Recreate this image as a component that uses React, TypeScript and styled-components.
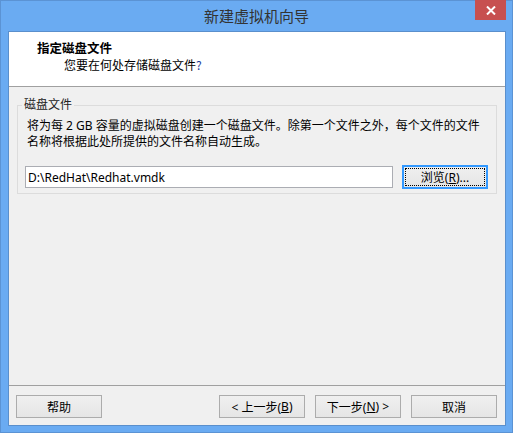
import React from 'react';
import styled, { createGlobalStyle } from 'styled-components';

const GlobalStyle = createGlobalStyle`
  html, body {
    margin: 0;
    padding: 0;
    background: #6aabf2;
  }
  body {
    font-family: "Noto Sans", "Noto Sans CJK SC", sans-serif;
    font-size: 12px;
    color: #000;
  }
`;

const Frame = styled.div`
  width: 513px;
  height: 433px;
  box-sizing: border-box;
  background: #6aabf2;
  border: 1px solid #5b93d4;
  display: flex;
  flex-direction: column;
`;

const TitleBar = styled.div`
  height: 30px;
  display: grid;
  grid-template-columns: 1fr auto 1fr;
  align-items: start;
`;

const Title = styled.div`
  grid-column: 2;
  font-family: "Noto Sans CJK SC", sans-serif;
  font-size: 15px;
  line-height: 30px;
  color: #333;
`;

const CloseButton = styled.div`
  grid-column: 3;
  justify-self: end;
  width: 31px;
  height: 20px;
  margin-top: -1px;
  margin-right: 6px;
  background: #c75050;
  display: flex;
  align-items: center;
  justify-content: center;
`;

const Client = styled.div`
  flex: 1;
  margin: 0 6px 6px 7px;
  background: #f0f0f0;
  border: 1px solid #5a8fcc;
  display: flex;
  flex-direction: column;
`;

const Header = styled.div`
  height: 55px;
  background: #fff;
  border-bottom: 1px solid #a0a0a0;
  padding: 7px 0 0 28px;
  box-sizing: border-box;
`;

const HeaderTitle = styled.div`
  font-family: "Noto Sans CJK SC", sans-serif;
  font-weight: bold;
  font-size: 12.5px;
  line-height: 17px;
`;

const HeaderSub = styled.div`
  font-family: "Noto Sans CJK SC", sans-serif;
  margin-left: 27px;
  line-height: 17px;
  .q { color: #1d3c9a; }
`;

const Body = styled.div`
  flex: 1;
  padding: 10px 8px 0 8px;
`;

const Group = styled.fieldset`
  margin: 0;
  padding: 0 8px 8px 7px;
  border: 1px solid #dcdcdc;
  height: 97px;
  box-sizing: border-box;
`;

const Legend = styled.legend`
  padding: 0 2px;
  margin-left: -3px;
  line-height: 16px;
  color: #222;
`;

const Description = styled.p`
  margin: 5px 0 0 2px;
  line-height: 16px;
  width: 460px;
`;

const PathRow = styled.div`
  display: flex;
  align-items: center;
  margin-top: 15px;
  gap: 9px;
`;

const PathInput = styled.input`
  width: 368px;
  height: 22px;
  box-sizing: border-box;
  border: 1px solid #abadb3;
  padding: 0 2px;
  font-family: "Noto Sans", sans-serif;
  font-size: 12px;
  color: #000;
  background: #fff;
  outline: none;
`;

const Button = styled.button<{ $focused?: boolean }>`
  width: 86px;
  height: ${p => (p.$focused ? '24px' : '23px')};
  box-sizing: border-box;
  border: 1px solid ${p => (p.$focused ? '#3399ff' : '#acacac')};
  box-shadow: ${p => (p.$focused ? 'inset 0 0 0 1px #3399ff' : 'none')};
  background: linear-gradient(#f0f0f0, #e5e5e5);
  font-family: "Noto Sans", "Noto Sans CJK SC", sans-serif;
  font-size: 12px;
  color: #000;
  padding: 0;
  display: flex;
  align-items: center;
  justify-content: center;
  position: relative;
  ${p =>
    p.$focused &&
    `&::after {
      content: '';
      position: absolute;
      inset: 2px;
      border: 1px dotted #000;
    }`}
  u { text-decoration: underline; }
`;

const Footer = styled.div`
  border-top: 1px solid #a0a0a0;
  height: 40px;
  box-sizing: border-box;
  padding: 9px 8px 0 7px;
  display: flex;
  align-items: flex-start;
`;

const Spacer = styled.div`
  flex: 1;
`;

const NavGroup = styled.div`
  display: flex;
  gap: 10px;
`;

export default function App() {
  return (
    <>
      <GlobalStyle />
      <Frame>
        <TitleBar>
          <Title>新建虚拟机向导</Title>
          <CloseButton>
            <svg width="10" height="9" viewBox="0 0 10 9">
              <path d="M1 0.5 L9 8.5 M9 0.5 L1 8.5" stroke="#fff" strokeWidth="2" />
            </svg>
          </CloseButton>
        </TitleBar>
        <Client>
          <Header>
            <HeaderTitle>指定磁盘文件</HeaderTitle>
            <HeaderSub>
              您要在何处存储磁盘文件<span className="q">?</span>
            </HeaderSub>
          </Header>
          <Body>
            <Group>
              <Legend>磁盘文件</Legend>
              <Description>
                将为每 2 GB 容量的虚拟磁盘创建一个磁盘文件。除第一个文件之外，每个文件的文件名称将根据此处所提供的文件名称自动生成。
              </Description>
              <PathRow>
                <PathInput defaultValue="D:\RedHat\Redhat.vmdk" />
                <Button $focused>
                  浏览(<u>R</u>)...
                </Button>
              </PathRow>
            </Group>
          </Body>
          <Footer>
            <Button>帮助</Button>
            <Spacer />
            <NavGroup>
              <Button>
                &lt; 上一步(<u>B</u>)
              </Button>
              <Button>
                下一步(<u>N</u>) &gt;
              </Button>
              <Button>取消</Button>
            </NavGroup>
          </Footer>
        </Client>
      </Frame>
    </>
  );
}
